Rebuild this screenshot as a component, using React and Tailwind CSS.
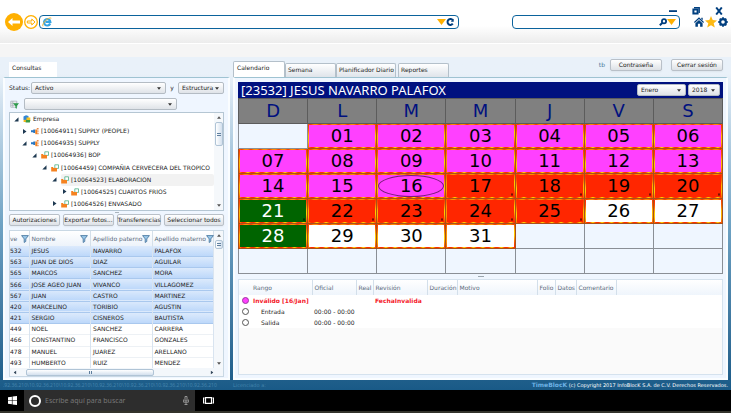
import React from "react";

const people = [
  ["532", "JESUS", "NAVARRO", "PALAFOX"],
  ["563", "JUAN DE DIOS", "DIAZ", "AGUILAR"],
  ["565", "MARCOS", "SANCHEZ", "MORA"],
  ["566", "JOSE AGEO JUAN", "VIVANCO", "VILLAGOMEZ"],
  ["567", "JUAN", "CASTRO", "MARTINEZ"],
  ["420", "MARCELINO", "TORIBIO", "AGUSTIN"],
  ["421", "SERGIO", "CISNEROS", "BAUTISTA"],
  ["449", "NOEL", "SANCHEZ", "CARRERA"],
  ["466", "CONSTANTINO", "FRANCISCO", "GONZALES"],
  ["478", "MANUEL", "JUAREZ", "ARELLANO"],
  ["493", "HUMBERTO", "RUIZ", "MENDEZ"],
];

const tree = [
  { label: "Empresa", pad: "pl-1", open: true, icon: "company" },
  { label: "[10064911] SUPPLY (PEOPLE)", pad: "pl-3", open: false, icon: "plug" },
  { label: "[10064935] SUPPLY", pad: "pl-3", open: true, icon: "plug" },
  { label: "[10064936] BOP", pad: "pl-[22px]", open: true, icon: "folder" },
  { label: "[10064459] COMPAÑIA CERVECERA DEL TROPICO", pad: "pl-8", open: true, icon: "folder" },
  { label: "[10064523] ELABORACION", pad: "pl-[42px]", open: true, icon: "folder", active: true },
  { label: "[10064525] CUARTOS FRIOS", pad: "pl-[52px]", open: false, icon: "folder" },
  { label: "[10064526] ENVASADO", pad: "pl-[42px]", open: false, icon: "folder" },
];

const tones = {
  m: "bg-[#ff40ff] text-black",
  r: "bg-[#ff2600] text-black",
  g: "bg-[#006400] text-white",
  w: "bg-white text-black",
};

const weeks = [
  [null, ["01", "m"], ["02", "m"], ["03", "m"], ["04", "m"], ["05", "m"], ["06", "m"]],
  [["07", "m"], ["08", "m"], ["09", "m"], ["10", "m"], ["11", "m"], ["12", "m"], ["13", "m"]],
  [["14", "m"], ["15", "m"], ["16", "m"], ["17", "r"], ["18", "r"], ["19", "r"], ["20", "r"]],
  [["21", "g"], ["22", "r"], ["23", "r"], ["24", "r"], ["25", "r"], ["26", "w"], ["27", "w"]],
  [["28", "g"], ["29", "w"], ["30", "w"], ["31", "w"], null, null, null],
  [null, null, null, null, null, null, null],
];

const marked = ["17", "18", "19", "20", "21", "22", "23", "24", "25"];

function Triangle({ className }) {
  return (
    <svg viewBox="0 0 6 4" className={className} aria-hidden="true">
      <path d="M0 0h6L3 4z" fill="currentColor" />
    </svg>
  );
}

function Picker({ label, options, className }) {
  return (
    <div className={`flex h-3 items-center rounded-xs border border-[#b4bcc4] bg-linear-to-b from-white to-[#dfe3e8] pr-1 ${className}`}>
      <select aria-label={label} className="h-full min-w-0 flex-1 appearance-none bg-transparent pl-[3px] text-[#222] outline-none">
        {options.map((o) => (
          <option key={o}>{o}</option>
        ))}
      </select>
      <Triangle className="h-[3px] w-1 shrink-0 text-[#333]" />
    </div>
  );
}

function Push({ children, className }) {
  return (
    <button className={`flex h-3 items-center justify-center rounded-xs border border-[#b9c0c8] bg-linear-to-b from-white to-[#dde1e6] whitespace-nowrap text-[#222] shadow-xs ${className}`}>
      {children}
    </button>
  );
}

function Funnel() {
  return (
    <svg viewBox="0 0 8 8" className="h-2 w-2 shrink-0" aria-hidden="true">
      <path d="M.6.6h6.8L4.8 3.9v2.5L3.2 7.5V3.9z" fill="#9cc9ea" stroke="#3f6f98" strokeWidth=".8" />
    </svg>
  );
}

function TreeIcon({ kind }) {
  if (kind === "company")
    return (
      <svg viewBox="0 0 8 8" className="h-2 w-2 shrink-0" aria-hidden="true">
        <path d="M.5 1.5 3 .3l2.500.8v4H.5z" fill="#2f86d6" />
        <path d="M3.500 2.500h3.800v3H3.500z" fill="#f5c21b" />
        <path d="M.6 4.800h3V7h-3z" fill="#f3b71c" />
        <path d="M3 5h4.400L6.800 7.500H2.600z" fill="#3b9a44" />
      </svg>
    );
  if (kind === "plug")
    return (
      <svg viewBox="0 0 8 8" className="h-2 w-2 shrink-0" aria-hidden="true">
        <path d="M0 3.200h2.300V2.500h2v3.400h-2v-.7H0z" fill="#2776c2" />
        <path d="M4.300 2.500h2v4.700h-2z" fill="#f58220" />
        <path d="M5.800 1h1.800v1.500H5.800zM6.300 3.500h1.300v1.300H6.300zM6.300 5.700h1.300v1.500H6.300z" fill="#e8894a" />
      </svg>
    );
  return (
    <svg viewBox="0 0 8 8" className="h-2 w-2 shrink-0" aria-hidden="true">
      <path d="M3.800.8h3.700v3.600H3.800z" fill="#fff" stroke="#4fb088" strokeWidth=".8" />
      <path d="M.2 3h1.800l.5.900h3.500v3.600H.2z" fill="#f58220" />
    </svg>
  );
}

function Browser() {
  return (
    <header className="bg-linear-to-b from-white from-60% to-[#ececec]">
      <div className="flex h-[15px] items-end justify-end gap-[15px] pr-2 text-[#003f7f]">
        <button aria-label="Minimizar" className="flex h-2 w-2 items-center">
          <svg viewBox="0 0 8 8" className="h-2 w-2"><path d="M0 3.200h8v1.800H0z" fill="currentColor" /></svg>
        </button>
        <button aria-label="Restaurar" className="h-2 w-2">
          <svg viewBox="0 0 8 8" className="h-2 w-2"><path d="M2 .800h5.200v5.200" fill="none" stroke="currentColor" strokeWidth="1.400" /><path d="M1.400 2.400h4.200v4.200H1.400z" fill="#fff" stroke="currentColor" strokeWidth="2" /></svg>
        </button>
        <button aria-label="Cerrar" className="h-2 w-2">
          <svg viewBox="0 0 8 8" className="h-2 w-2"><path d="M1.200.5 6.800 7.500M6.800.5 1.200 7.500" stroke="currentColor" strokeWidth="2" /></svg>
        </button>
      </div>
      <div className="flex h-[28px] items-start pr-[3px] pl-[5px] text-[#003f7f]">
        <button aria-label="Atrás" className="-mt-0.5 h-[18px] w-[18px] shrink-0">
          <svg viewBox="0 0 18 18" className="h-[18px] w-[18px]"><circle cx="9" cy="9" r="9" fill="#ffb000" /><path d="M3 9l4.500-4v2.600H15v2.800H7.500V13z" fill="#fff" /></svg>
        </button>
        <button aria-label="Adelante" className="mr-px ml-px h-3.5 w-3.5 shrink-0">
          <svg viewBox="0 0 14 14" className="h-3.5 w-3.5"><circle cx="7" cy="7" r="6.300" fill="#fff" stroke="#ffb000" strokeWidth="1.300" /><path d="M11 7 7.800 4v2H3.300v2h4.500v2z" fill="#fff" stroke="#ffb000" strokeWidth="1" /></svg>
        </button>
        <div className="flex h-3.5 flex-[13] items-center rounded-[4px] border border-[#0b639c] bg-white pr-1 pl-0.5">
          <svg viewBox="0 0 10 10" className="h-2.5 w-2.5 shrink-0" aria-hidden="true">
            <path d="M8.200 6.500A3.200 3.200 0 1 1 8.400 5H3.500" fill="none" stroke="#35a4e4" strokeWidth="2.100" />
            <path d="M1 9.300C-.8 7 6.500-.6 9.300 1.200" fill="none" stroke="#f2b632" strokeWidth="1" />
          </svg>
          <input aria-label="Dirección" className="h-2.5 min-w-0 flex-1 bg-transparent outline-none" />
          <Triangle className="h-1.5 w-[9px] text-[#ffb000]" />
          <svg viewBox="0 0 8 8" className="h-2 w-2" aria-hidden="true"><path d="M6.800 2.300A2.900 2.900 0 1 0 6.800 5.700" fill="none" stroke="currentColor" strokeWidth="2" /><path d="M7.700.8v3H4.800z" fill="currentColor" /></svg>
        </div>
        <div className="ml-[53px] flex h-3.5 flex-[5] items-center rounded-[4px] border border-[#0b639c] bg-white pr-[3px] pl-1">
          <input aria-label="Buscar" className="h-2.5 min-w-0 flex-1 bg-transparent outline-none" />
          <svg viewBox="0 0 8 8" className="h-2 w-2" aria-hidden="true"><circle cx="5" cy="3.200" r="2.100" fill="none" stroke="currentColor" strokeWidth="1.800" /><path d="M3.500 4.800.8 7.300" stroke="currentColor" strokeWidth="2" /></svg>
          <Triangle className="h-1.5 w-[9px] text-[#ffb000]" />
        </div>
        <div className="ml-3.5 flex h-3.5 items-center gap-px">
          <svg viewBox="0 0 10 10" className="h-2.5 w-2.5"><path d="M5 .3 10 5l-.8.9L5 2 .8 5.900 0 5zM7.300.8h1.400v2.400L7.300 2zM5 2.900l3.600 3.300v3.500H6.100V6.800H3.900v2.900H1.400V6.200z" fill="currentColor" /></svg>
          <svg viewBox="0 0 12 12" className="h-3 w-3"><path d="M6 0l1.700 4.100 4.300.3-3.300 2.800 1.100 4.400L6 9.200l-3.800 2.400 1.100-4.400L0 4.400l4.300-.3z" fill="#fdb913" /></svg>
          <svg viewBox="0 0 10 10" className="h-2.5 w-2.5"><circle cx="5" cy="5" r="2.900" fill="none" stroke="currentColor" strokeWidth="2.200" /><path d="M5 .3v1.500M5 8.200v1.500M.3 5h1.500M8.200 5h1.500M1.700 1.700l1 1M7.300 7.300l1 1M1.700 8.300l1-1M7.300 2.700l1-1" stroke="currentColor" strokeWidth="1.800" /></svg>
        </div>
      </div>
    </header>
  );
}

function Tree() {
  return (
    <div className="mt-0.5 flex h-[99px] border border-[#b5c6d3] bg-white">
      <ul className="flex min-w-0 flex-1 flex-col">
        {tree.map((n) => (
          <li key={n.label} className={`flex min-h-0 flex-1 items-center whitespace-nowrap ${n.pad}`}>
            <svg viewBox="0 0 5 5" className="h-[5px] w-[5px] shrink-0" aria-hidden="true">
              <path d={n.open ? "M4.500.3v4.200H.3z" : "M1 0l3.500 2.500L1 5z"} fill="#1d3850" />
            </svg>
            <span className={`ml-1 flex h-full flex-1 items-center gap-0.5 ${n.active ? "rounded-xs bg-[#f2f2f2]" : ""}`}>
              <TreeIcon kind={n.icon} />
              {n.label}
            </span>
          </li>
        ))}
      </ul>
      <div className="flex w-[9px] flex-col items-center justify-between bg-[#f5f8fb] py-[3px] text-[#555]">
        <div className="flex flex-col items-center gap-[3px]">
          <Triangle className="h-[3px] w-1 rotate-180" />
          <div className="flex h-6 w-2 items-center justify-center rounded-xs border border-[#b0c4d6] bg-linear-to-r from-white to-[#d3e0ee]">
            <div className="h-[3px] w-1 border-y border-[#5f7f9e]" />
          </div>
        </div>
        <Triangle className="h-[3px] w-1" />
      </div>
    </div>
  );
}

function People() {
  return (
    <div className="mt-1 border border-[#c9d8e4] bg-white">
      <div className="flex h-[137px] overflow-hidden">
        <div className="min-w-0 flex-1">
          <table className="h-[138px] w-full table-fixed border-collapse text-left">
            <colgroup>
              <col className="w-[19px]" />
              <col />
              <col />
              <col />
            </colgroup>
            <thead>
              <tr className="h-[15px] bg-linear-to-b from-white to-[#edf3fa] text-[#5b6b7c]">
                {["ve", "Nombre", "Apellido paterno", "Apellido materno"].map((h, i) => (
                  <th key={h} className={`border-r border-[#d5e0ea] p-0 font-normal ${i ? "pr-[2px] pl-[2px]" : ""}`}>
                    <div className="flex items-center justify-between whitespace-nowrap">
                      {h}
                      <Funnel />
                    </div>
                  </th>
                ))}
              </tr>
            </thead>
            <tbody>
              {people.map((p, r) => (
                <tr key={p[0]} className={r < 7 ? "border-b border-[#a9c8ee] bg-linear-to-b from-[#dceafc] to-[#bdd8fa]" : "border-b border-[#edf1f5] bg-white"}>
                  {p.map((c, i) => (
                    <td key={i} className={`border-r border-[#d9e4f0] p-0 whitespace-nowrap ${i ? "pl-[2px]" : ""}`}>
                      {c}
                    </td>
                  ))}
                </tr>
              ))}
            </tbody>
          </table>
        </div>
        <div className="flex w-[9px] shrink-0 flex-col items-center justify-between bg-[#f5f8fb] py-[3px] text-[#555]">
          <div className="flex flex-col items-center gap-[3px]">
            <Triangle className="h-[3px] w-1 rotate-180" />
            <div className="flex h-[9px] w-2 items-center justify-center rounded-xs border border-[#b0c4d6] bg-linear-to-r from-white to-[#d3e0ee]">
              <div className="h-[3px] w-1 border-y border-[#5f7f9e]" />
            </div>
          </div>
          <Triangle className="h-[3px] w-1" />
        </div>
      </div>
      <div className="flex h-2 items-center bg-[#f3f7fb] pr-[9px] pl-[3px] text-[#33475b]">
        <Triangle className="h-[3px] w-1 rotate-90" />
        <div className="ml-[9px] flex h-[7px] w-32 items-center justify-center rounded-xs border border-[#b0c4d6] bg-linear-to-b from-white to-[#d3e0ee]">
          <div className="h-[3px] w-[3px] border-x border-[#5f7f9e]" />
        </div>
        <Triangle className="ml-auto h-[3px] w-1 -rotate-90" />
      </div>
    </div>
  );
}

function Sidebar() {
  return (
    <section className="flex w-[227px] shrink-0 flex-col pt-[5px]">
      <h2 className="ml-1.5 flex h-[15px] w-12 items-center bg-white pb-[3px] pl-[3px]">Consultas</h2>
      <div className="flex h-[303px] flex-col border-2 border-t border-[#fafdff] border-t-[#9fc3d2] bg-[#eff6ff] px-1 pt-1">
        <div className="flex items-center">
          <span className="w-[22px] shrink-0 whitespace-nowrap">Status:</span>
          <Picker label="Status" options={["Activo"]} className="min-w-0 flex-1" />
          <span className="w-3 text-center">y</span>
          <Picker label="Agrupación" options={["Estructura"]} className="w-[46px]" />
        </div>
        <div className="mt-1 flex items-center">
          <svg viewBox="0 0 9 9" className="mr-[5px] ml-px h-[9px] w-[9px]" aria-hidden="true">
            <path d="M.8 1.200h6v6h-6zM.8 3.200h6M.8 5.200h6M2.800 1.200v6" fill="#fff" stroke="#99a5ad" strokeWidth=".7" />
            <path d="M3 3.200h6L6.800 6v2.800L5.400 8V6z" fill="#2c9c4b" />
          </svg>
          <Picker label="Filtro" options={[""]} className="w-[153px]" />
        </div>
        <Tree />
        <div className="mx-auto mt-px h-px w-1 bg-[#a9b4bd]" />
        <div className="mt-px flex gap-[3px]">
          <Push className="w-[51px]">Autorizaciones</Push>
          <Push className="w-[51px]">Exportar fotos...</Push>
          <Push className="w-11">Transferencias</Push>
          <Push className="flex-1">Seleccionar todos</Push>
        </div>
        <People />
      </div>
    </section>
  );
}

function Calendar() {
  return (
    <table className="w-full table-fixed border-collapse border border-[#808890] text-center font-['DejaVu_Sans',sans-serif] text-[18px] leading-[18px]">
      <thead>
        <tr className="h-[25px] bg-[#808080] text-[#00117f]">
          {["D", "L", "M", "M", "J", "V", "S"].map((d, i) => (
            <th key={i} className="border border-[#5c5c5c] p-0 font-normal">{d}</th>
          ))}
        </tr>
      </thead>
      <tbody>
        {weeks.map((w, r) => (
          <tr key={r} className="h-[25px]">
            {w.map((c, i) =>
              c ? (
                <td key={i} className="border border-[#a8501a] bg-[repeating-linear-gradient(105deg,#ff2a00_0px,#ff3000_2px,#ffe800_5px,#ff3000_8px,#ff2a00_9px)] p-0">
                  <div className={`relative m-px flex h-[22px] items-center justify-center ${tones[c[1]]}`}>
                    {c[0]}
                    {c[0] === "16" && <div className="absolute inset-0 rounded-[50%] border border-[#7a1c7a]" />}
                    {marked.includes(c[0]) && <div className="absolute right-px bottom-px h-[3px] w-[2px] rounded-full border border-black/50" />}
                  </div>
                </td>
              ) : (
                <td key={i} className="border border-[#8a8f96] p-0" />
              )
            )}
          </tr>
        ))}
      </tbody>
    </table>
  );
}

function Details() {
  const head = "border-r border-[#d3dfea] p-0 pl-[2px] font-normal whitespace-nowrap";
  return (
    <div className="h-24 border border-[#d5e2ee] bg-[#fafafa]">
      <table className="w-full table-fixed border-collapse bg-white text-left">
        <thead>
          <tr className="h-[15px] bg-linear-to-b from-white to-[#eff5fc] text-[#5b6b7c]">
            <th className="w-3 p-0" aria-label="Estado" />
            <th className={`w-[61px] ${head}`}>Rango</th>
            <th className={`w-[44px] ${head}`}>Oficial</th>
            <th className={`w-[17px] ${head}`}>Real</th>
            <th className={`w-[54px] ${head}`}>Revisión</th>
            <th className={`w-[30px] ${head}`}>Duración</th>
            <th className={`w-[80px] ${head}`}>Motivo</th>
            <th className={`w-[18px] ${head}`}>Folio</th>
            <th className={`w-[21px] ${head}`}>Datos</th>
            <th className={`w-10 ${head}`}>Comentario</th>
            <th className="p-0" />
          </tr>
        </thead>
        <tbody>
          <tr className="h-[11px] font-bold text-[#f5202a]">
            <td className="p-0 pl-[3px]"><div className="h-[7px] w-[7px] rounded-full border border-[#9a3ba0] bg-[#ff40ff]" /></td>
            <td className="p-0 pl-[2px] whitespace-nowrap" colSpan={3}>Inválido [16/Jan]</td>
            <td className="p-0 pl-[2px] whitespace-nowrap" colSpan={7}>FechaInvalida</td>
          </tr>
          {["Entrada", "Salida"].map((t) => (
            <tr key={t} className="h-[11px]">
              <td className="p-0 pl-[3px]"><div className="h-[7px] w-[7px] rounded-full border border-[#555] bg-white" /></td>
              <td className="p-0 pl-[10px]">{t}</td>
              <td className="p-0 pl-[2px] whitespace-nowrap" colSpan={9}>00:00 - 00:00</td>
            </tr>
          ))}
        </tbody>
      </table>
    </div>
  );
}

function Main() {
  const tab = "flex h-3.5 items-center rounded-t-xs border border-b-0 border-[#b4c0ca] bg-linear-to-b from-white to-[#dfe4ea] pb-0.5 pl-[2px] whitespace-nowrap";
  return (
    <section className="flex min-w-0 flex-1 flex-col pt-1">
      <div className="flex h-4 items-end">
        <button className="flex h-4 w-[52px] items-center rounded-t-xs border border-b-0 border-[#b4c0ca] bg-white pb-[3px] pl-[3px]">Calendario</button>
        <button className={`w-[51px] ${tab}`}>Semana</button>
        <button className={`mr-0.5 w-[60px] ${tab}`}>Planificador Diario</button>
        <button className={`w-[51px] ${tab}`}>Reportes</button>
        <div className="mb-1.5 ml-auto flex items-center gap-[5px] pr-[5px]">
          <span className="text-[#48779b]">tb</span>
          <Push className="w-[52px]">Contraseña</Push>
          <Push className="ml-1 w-[52px]">Cerrar sesión</Push>
        </div>
      </div>
      <div className="flex h-[303px] flex-col border-2 border-t border-[#fafdff] border-t-[#9fc3d2] bg-[#eff6ff] px-[3px] pt-1">
        <div className="flex h-4 items-center bg-[#00117f] px-[3px]">
          <h1 className="min-w-0 flex-1 font-['Noto_Sans',sans-serif] text-[13px] leading-4 whitespace-nowrap text-white">[23532] JESUS NAVARRO PALAFOX</h1>
          <Picker label="Mes" options={["Enero"]} className="mr-[2px] w-[49px]" />
          <Picker label="Año" options={["2018"]} className="w-8" />
        </div>
        <Calendar />
        <div className="mx-auto my-0.5 h-px w-1.5 bg-[#9aa5ae]" />
        <Details />
      </div>
    </section>
  );
}

export default function App() {
  return (
    <div className="flex min-h-screen flex-col overflow-hidden bg-white font-['DejaVu_Sans',Verdana,sans-serif] text-[6px] leading-[8px] text-[#222]">
      <Browser />
      <div className="h-3.5 border-t border-white bg-[#f5f5f5]" />
      <div className="flex flex-1 flex-col bg-linear-to-b from-[#e9f1f9] from-5% via-[#6fa3c4] via-50% to-[#195a87]">
        <main className="flex flex-1 gap-[3px] px-[3px]">
          <Sidebar />
          <Main />
        </main>
        <footer className="flex h-2.5 items-center gap-[5px] px-[3px] text-[5px] whitespace-nowrap">
          <p className="w-[225px] shrink-0 font-['Noto_Sans',sans-serif] text-[#4584ac]">.92.36.210\10.92.36.210\10.92.36.210\10.92.36.210\10.92.36.210\10.92.36.210\10.92.36.210</p>
          <p className="text-[#4584ac]">Licenciado a:</p>
          <p className="ml-auto text-white"><b className="text-[6px] text-[#6db1e4]">TimeBlocK</b> (c) Copyright 2017 InfoBlocK S.A. de C.V. Derechos Reservados.</p>
        </footer>
      </div>
      <div className="flex h-[23px] items-stretch border-b-2 border-[#33332b] bg-black text-white">
        <button aria-label="Inicio" className="flex w-6 items-center justify-center">
          <svg viewBox="0 0 9 9" className="h-[9px] w-[9px]"><path d="M0 1.300 3.900.7v3.500H0zM4.500.6 9 0v4.200H4.500zM0 4.800h3.900v3.500L0 7.700zM4.500 4.800H9V9l-4.500-.6z" fill="#fff" /></svg>
        </button>
        <div className="flex w-[171px] items-center bg-[#2d2d2d] pr-1.5 pl-[5px]">
          <div className="h-3 w-3 shrink-0 rounded-full border-2 border-white" />
          <input aria-label="Buscar en el equipo" placeholder="Escribe aquí para buscar" className="ml-1 min-w-0 flex-1 bg-transparent font-['Noto_Sans',sans-serif] text-[7px] outline-none placeholder:text-[#777]" />
          <svg viewBox="0 0 6 9" className="h-[9px] w-1.5" aria-hidden="true"><path d="M2 .5h2v4.500H2zM.6 3.500v2.700h4.800V3.500M3 6.200V8.500M1.500 8.500h3" fill="none" stroke="#aaa" strokeWidth=".8" /></svg>
        </div>
        <button aria-label="Vista de tareas" className="flex w-[26px] items-center justify-center">
          <svg viewBox="0 0 11 7" className="h-[7px] w-[11px]"><path d="M2.500.6h6v5.800h-6zM1.500 1H.5v5h1M9.500 1h1v5h-1" fill="none" stroke="#fff" strokeWidth="1.200" /></svg>
        </button>
      </div>
    </div>
  );
}
